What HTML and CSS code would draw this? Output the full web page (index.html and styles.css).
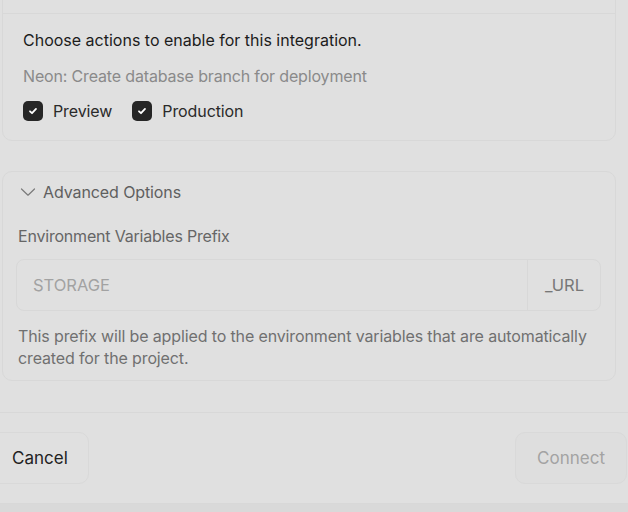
FILE: index.html
```html
<!DOCTYPE html>
<html lang="en">
<head>
<meta charset="utf-8">
<title>Integration actions</title>
<link rel="stylesheet" href="styles.css">
</head>
<body>
<div class="page">
  <section class="card card-actions">
    <div class="card-head"></div>
    <div class="card-body">
      <p class="title">Choose actions to enable for this integration.</p>
      <p class="action-name">Neon: Create database branch for deployment</p>
      <div class="checks">
        <label class="check">
          <span class="box"><svg width="12" height="12" viewBox="0 0 12 12"><path d="M3 6.3 5 8.2 9 3.9" fill="none" stroke="#fff" stroke-width="1.8" stroke-linecap="round" stroke-linejoin="round"/></svg></span>
          <span>Preview</span>
        </label>
        <label class="check">
          <span class="box"><svg width="12" height="12" viewBox="0 0 12 12"><path d="M3 6.3 5 8.2 9 3.9" fill="none" stroke="#fff" stroke-width="1.8" stroke-linecap="round" stroke-linejoin="round"/></svg></span>
          <span>Production</span>
        </label>
      </div>
    </div>
  </section>

  <section class="card card-advanced">
    <div class="adv-head">
      <svg class="chev" width="16" height="16" viewBox="0 0 16 16"><path d="M1.5 5 8 11.2 14.5 5" fill="none" stroke="#7a7a7a" stroke-width="1.2" stroke-linecap="round" stroke-linejoin="round"/></svg>
      <span>Advanced Options</span>
    </div>
    <div class="adv-body">
      <div class="field-label">Environment Variables Prefix</div>
      <div class="input">
        <span class="input-value">STORAGE</span>
        <span class="input-suffix">_URL</span>
      </div>
      <p class="help">This prefix will be applied to the environment variables that are automatically created for the project.</p>
    </div>
  </section>
</div>

<footer class="footer">
  <button class="btn btn-cancel">Cancel</button>
  <button class="btn btn-connect">Connect</button>
</footer>
<div class="below"></div>
</body>
</html>
```

FILE: styles.css
```css
* { box-sizing: border-box; }
html, body { margin: 0; padding: 0; }
body {
  background: #e0e0e0;
  font-family: Inter, "Noto Sans", sans-serif;
  color: #222;
  width: 628px;
  height: 512px;
  overflow: hidden;
}
p { margin: 0; }

.page {
  padding: 0 12px 0 2px;
}

.card {
  border: 1px solid #d8d8d8;
  border-radius: 10px;
}

.card-actions {
  margin-top: -20px;
}
.card-head {
  height: 33px;
  border-bottom: 1px solid #d8d8d8;
}
.card-body {
  padding: 14px 20px 19px;
}
.title {
  font-size: 16px;
  line-height: 24px;
  color: #1c1c1c;
}
.action-name {
  margin-top: 12px;
  font-size: 16px;
  line-height: 24px;
  letter-spacing: -0.16px;
  color: #8a8a8a;
}
.checks {
  margin-top: 13px;
  display: flex;
  gap: 20px;
}
.check {
  display: flex;
  align-items: center;
  gap: 10px;
  font-size: 16px;
  line-height: 20px;
  letter-spacing: -0.1px;
  color: #2a2a2a;
}
.box {
  width: 20px;
  height: 20px;
  border-radius: 5px;
  background: #262626;
  display: flex;
  align-items: center;
  justify-content: center;
}
.box svg { display: block; }

.card-advanced {
  margin-top: 30px;
}
.adv-head {
  display: flex;
  align-items: center;
  gap: 7px;
  padding: 8px 16px 8px 17px;
  font-size: 16px;
  line-height: 24px;
  letter-spacing: -0.1px;
  color: #5f5f5f;
}
.chev { display: block; }
.adv-body {
  padding: 0 14px 11px 13px;
}
.field-label {
  margin-top: 12px;
  padding-left: 2px;
  font-size: 16px;
  line-height: 24px;
  letter-spacing: -0.2px;
  color: #666;
}
.input {
  margin-top: 11px;
  height: 52px;
  border: 1px solid #d8d8d8;
  border-radius: 8px;
  display: flex;
  align-items: stretch;
  font-size: 16.5px;
}
.input-value {
  flex: 1;
  display: flex;
  align-items: center;
  padding-left: 16px;
  color: #a2a2a2;
}
.input-suffix {
  display: flex;
  align-items: center;
  padding: 0 16px 0 17px;
  border-left: 1px solid #d8d8d8;
  color: #777;
}
.help {
  margin-top: 14px;
  padding-left: 2px;
  font-size: 16px;
  line-height: 22px;
  letter-spacing: -0.13px;
  color: #707070;
}

.footer {
  margin-top: 31px;
  border-top: 1px solid #d8d8d8;
  border-bottom: 1px solid #d8d8d8;
  padding: 19px 1px 19px 0;
  margin-left: -9px;
  display: flex;
  justify-content: space-between;
}
.btn {
  height: 52px;
  padding: 0 20px;
  font-family: Inter, "Noto Sans", sans-serif;
  font-size: 17px;
  border-radius: 10px;
  border: 1px solid #d9d9d9;
  background: #e0e0e0;
}
.btn-cancel { color: #222; }
.btn-connect { color: #a3a3a3; background: #dedede; padding: 0 21px; }
.below {
  height: 20px;
  background: #d9d9d9;
}
```
